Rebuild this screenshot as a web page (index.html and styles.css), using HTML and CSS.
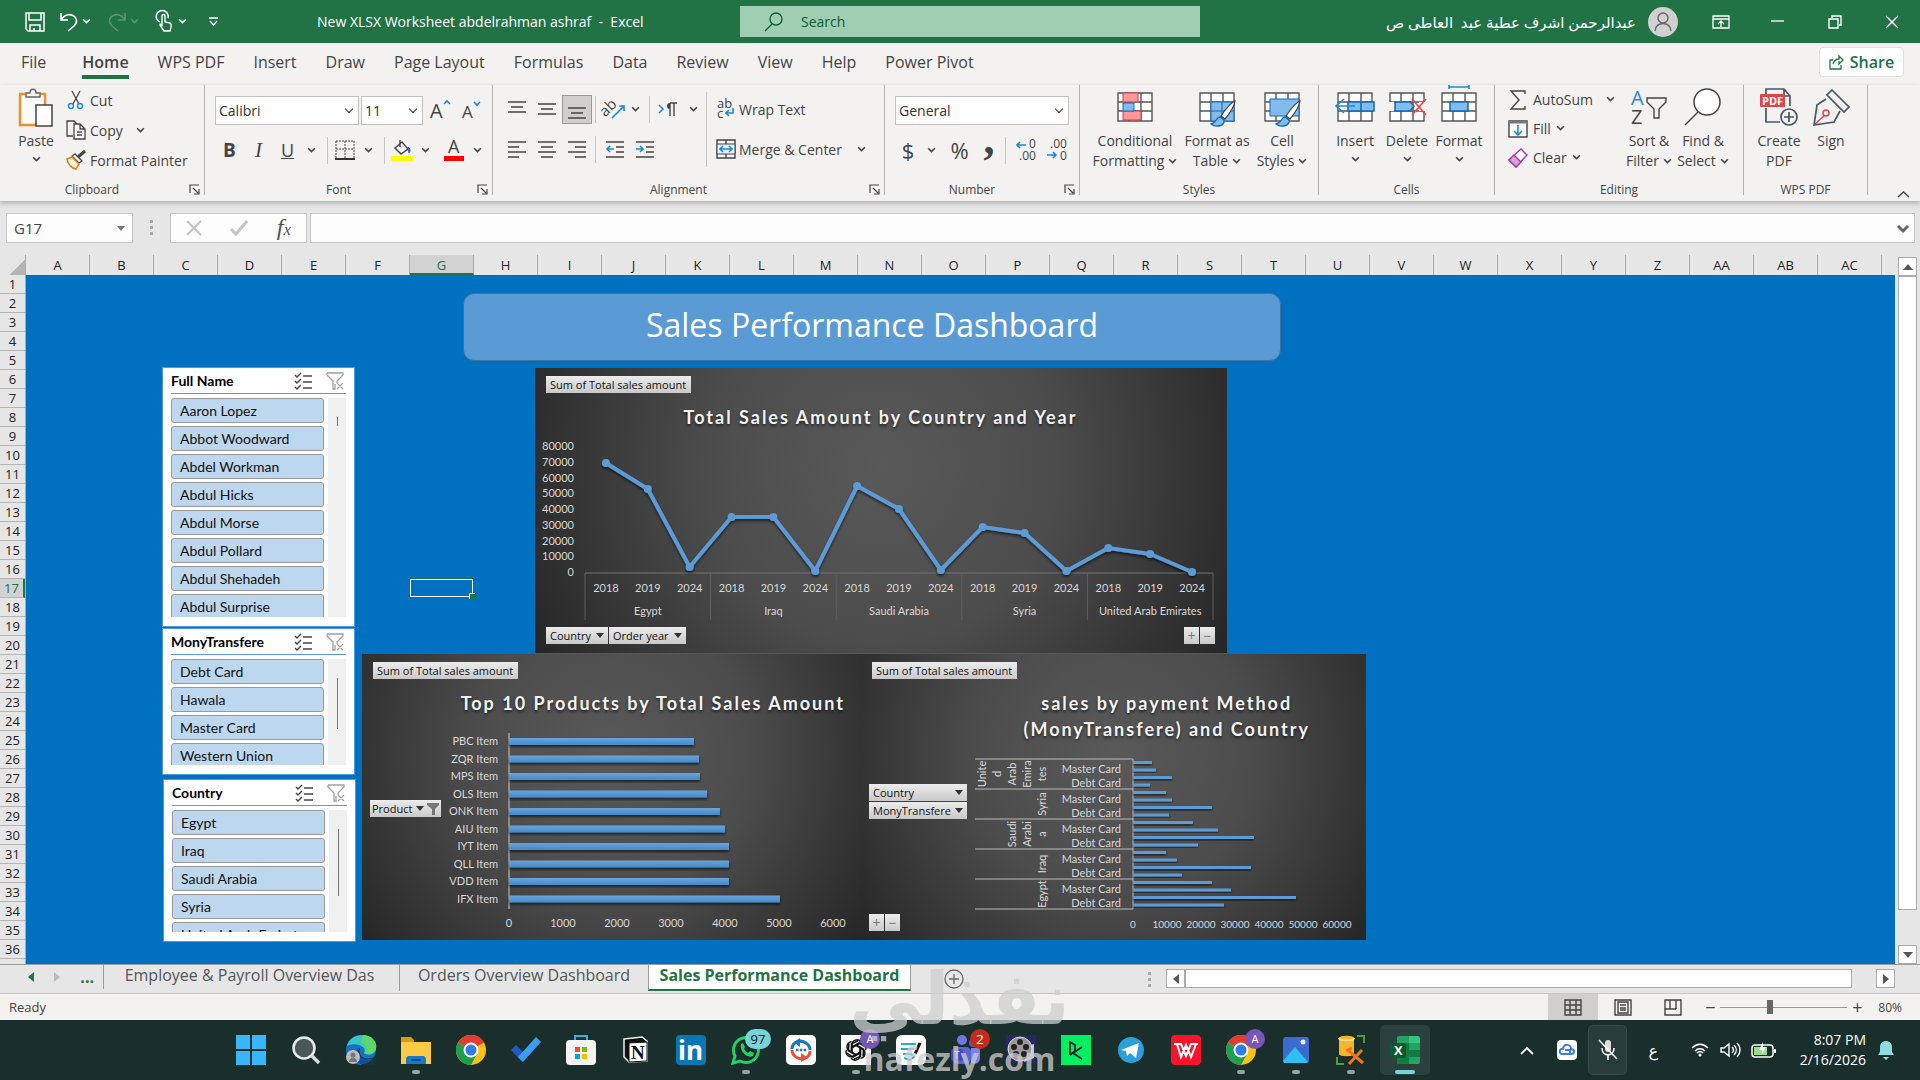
FILE: index.html
```html
<!DOCTYPE html>
<html lang="en">
<head>
  <meta charset="UTF-8" />
  <meta name="viewport" content="width=device-width, initial-scale=1.0" />
  <title>New XLSX Worksheet abdelrahman ashraf - Excel</title>
  <link rel="stylesheet" href="styles.css">
</head>
<body>
  <!-- Shared icons -->
  <svg class="sprite" aria-hidden="true">
    <symbol id="chev" viewBox="0 0 8 8"><path d="M1 2l3 3 3-3" fill="none" stroke="currentColor" stroke-width="1.4"/></symbol>
    <symbol id="launch" viewBox="0 0 11 11"><path d="M1 9V1h9M4 4l5 5M10 5v5H5" fill="none" stroke="#444" stroke-width="1.2"/></symbol>
    <symbol id="check-list" viewBox="0 0 18 18"><path d="M1 3l2 2 4-4M1 9l2 2 4-4M1 15l2 2 4-4M9 4h9M9 10h9M9 16h9" fill="none" stroke="#444" stroke-width="1.4"/></symbol>
    <symbol id="no-filter" viewBox="0 0 18 18"><path d="M1 1h16v2l-6 6v2M1 1v2l6 6v8h2v-5M11 11l6 6M17 11l-6 6" fill="none" stroke="#a0a0a0" stroke-width="1.3"/></symbol>
    <symbol id="table" viewBox="0 0 36 30"><path d="M1 1h34v28H1zM1 10h34M1 19h34M12 1v28M24 1v28" fill="#fff" stroke="#555" stroke-width="1.4"/></symbol>
    <symbol id="brush" viewBox="0 0 26 28"><path d="M25 1c-5 2-10 9-14 15l4 3c5-6 9-12 10-18z" fill="#fff" stroke="#444" stroke-width="1.3"/><path d="M10 17c-4 0-3 6-9 7 5 4 14 2 13-4z" fill="#83bcec" stroke="#1268b3" stroke-width="1.3"/></symbol>
    <symbol id="chrome" viewBox="0 0 30 30"><circle cx="15" cy="15" r="15" fill="#fbc116"/><path d="M15 15L2 7.500A15 15 0 0 1 28 7.500z" fill="#e33b2e"/><path d="M15 15L2 7.500A15 15 0 0 0 15 30l6-11z" fill="#1e9e50"/><circle cx="15" cy="15" r="7.500" fill="#fff"/><circle cx="15" cy="15" r="5.500" fill="#2f7de9"/></symbol>
  </svg>

  <!-- Title bar -->
  <header class="titlebar">
    <div class="quick">
      <button aria-label="Save"><svg width="20" height="20" viewBox="0 0 20 20"><path d="M1 1h18v18H3l-2-2zM4 1v7h12V1M5 19v-6h10v6M9 19v-3" fill="none" stroke="#fff" stroke-width="1.500"/></svg></button>
      <button aria-label="Undo"><svg width="20" height="20" viewBox="0 0 20 20"><path d="M2 1v7h7M2 8c4-6 10-7 14-3 3 4 1 7-1 9l-6 5" fill="none" stroke="#fff" stroke-width="1.600"/></svg></button>
      <button class="mini" aria-label="Undo history"><svg width="9" height="9"><use href="#chev"/></svg></button>
      <button class="dim" aria-label="Redo"><svg width="20" height="20" viewBox="0 0 20 20"><path d="M18 1v7h-7M18 8C14 2 8 1 4 5c-3 4-1 7 1 9l6 5" fill="none" stroke="#fff" stroke-width="1.600"/></svg></button>
      <button class="mini dim" aria-label="Redo history"><svg width="9" height="9"><use href="#chev"/></svg></button>
      <button aria-label="Touch mode"><svg width="18" height="21" viewBox="0 0 18 21"><path d="M4 11a6 6 0 1 1 8-4" fill="none" stroke="#fff" stroke-width="1.500"/><path d="M6 5c0-2 3-2 3 0v6l5 1c2 1 1 5 0 8H8l-4-6c0-1 1-1 2 0z" fill="#217346" stroke="#fff" stroke-width="1.400"/></svg></button>
      <button class="mini" aria-label="Touch options"><svg width="9" height="9"><use href="#chev"/></svg></button>
      <button aria-label="Customize"><svg width="9" height="9" viewBox="0 0 9 9"><path d="M0 1h9M1 4l3.500 4L8 4" fill="none" stroke="#fff" stroke-width="1.400"/></svg></button>
    </div>
    <h1>New XLSX Worksheet abdelrahman ashraf  -  Excel</h1>
    <label class="search">
      <svg width="20" height="20" viewBox="0 0 20 20"><circle cx="12" cy="7" r="6" fill="none" stroke="#0e5c33" stroke-width="1.300"/><path d="M8 12l-7 7" stroke="#0e5c33" stroke-width="1.300"/></svg>
      <input type="text" placeholder="Search" aria-label="Search" />
    </label>
    <div class="account">
      <span dir="rtl" lang="ar">عبدالرحمن اشرف عطية عبد&nbsp; العاطى ص</span>
      <svg width="30" height="30" viewBox="0 0 30 30"><circle cx="15" cy="15" r="15" fill="#d0d0d0"/><path d="M7 24c0-10 16-10 16 0M15 6a5 5 0 1 1 0 10 5 5 0 0 1 0-10" fill="none" stroke="#666" stroke-width="1.400"/></svg>
    </div>
    <div class="window-buttons">
      <button aria-label="Ribbon display"><svg width="18" height="14" viewBox="0 0 18 14"><path d="M1 1h16v12H1zM1 4h16M9 12V6M6 9l3-3 3 3" fill="none" stroke="#fff" stroke-width="1.300"/></svg></button>
      <button aria-label="Minimize"><svg width="13" height="13"><path d="M0 6h13" stroke="#fff" stroke-width="1.300"/></svg></button>
      <button aria-label="Restore"><svg width="14" height="14" viewBox="0 0 14 14"><path d="M1 4h9v9H1zM4 3V1h9v9h-2" fill="none" stroke="#fff" stroke-width="1.400"/></svg></button>
      <button aria-label="Close"><svg width="14" height="14" viewBox="0 0 14 14"><path d="M1 1l12 12M13 1L1 13" stroke="#fff" stroke-width="1.400"/></svg></button>
    </div>
  </header>

  <!-- Ribbon -->
  <nav class="menu">
    <a href="#" class="file">File</a>
    <a href="#" class="active">Home</a>
    <a href="#">WPS PDF</a>
    <a href="#">Insert</a>
    <a href="#">Draw</a>
    <a href="#">Page Layout</a>
    <a href="#">Formulas</a>
    <a href="#">Data</a>
    <a href="#">Review</a>
    <a href="#">View</a>
    <a href="#">Help</a>
    <a href="#">Power Pivot</a>
    <button class="share"><svg width="15" height="15" viewBox="0 0 15 15"><path d="M4 5H1v9h11v-4M4 9c1-3 3-5 6-5V1l4 4-4 4V6" fill="none" stroke="#217346" stroke-width="1.300"/></svg>Share</button>
  </nav>

  <div class="ribbon">
    <section class="group clipboard">
      <div class="tools">
        <button class="big"><svg width="36" height="40" viewBox="0 0 36 40"><rect x="2" y="6" width="25" height="31" fill="#fafafa" stroke="#e8912d" stroke-width="2.500"/><path d="M8 9V5h4c0-5 6-5 6 0h4v4z" fill="#f3f3f3" stroke="#666" stroke-width="1.400"/><rect x="18" y="17" width="16" height="21" fill="#fff" stroke="#444" stroke-width="1.500"/></svg><span>Paste</span><svg class="chev"><use href="#chev"/></svg></button>
        <div class="stack">
          <button><svg width="20" height="20" viewBox="0 0 20 20"><path d="M6 1l7 13M14 1L7 14" stroke="#444" stroke-width="1.300"/><circle cx="5" cy="16" r="2.500" fill="none" stroke="#1e88d8" stroke-width="1.400"/><circle cx="14" cy="16" r="2.500" fill="none" stroke="#1e88d8" stroke-width="1.400"/></svg>Cut</button>
          <button><svg width="20" height="20" viewBox="0 0 20 20"><path d="M7 16H1V1h7l3 3" fill="none" stroke="#444" stroke-width="1.300"/><path d="M8 4h6l5 5v10H8zM14 4v5h5M11 12h5M11 15h5" fill="#fff" stroke="#444" stroke-width="1.300"/></svg>Copy<svg class="chev wide"><use href="#chev"/></svg></button>
          <button><svg width="20" height="20" viewBox="0 0 20 20"><path d="M19 1l-7 6" stroke="#444" stroke-width="3"/><path d="M9 4l7 7-3 2-7-7z" fill="#fff" stroke="#444" stroke-width="1.200"/><path d="M6 7l7 7-3 5C5 18 2 14 1 9z" fill="#fdf0dc" stroke="#e0811a" stroke-width="1.500"/></svg>Format Painter</button>
        </div>
      </div>
      <footer class="launcher">Clipboard<svg width="11" height="11"><use href="#launch"/></svg></footer>
    </section>

    <section class="group font">
      <div class="tools">
        <div class="row font-top">
          <span class="combo"><select aria-label="Font"><option>Calibri</option></select></span>
          <span class="combo"><select aria-label="Font size"><option>11</option></select></span>
          <button aria-label="Grow font"><svg width="20" height="22" viewBox="0 0 20 22"><text x="0" y="19" font-size="20">A</text><path d="M14 5l3-3 3 3" class="b"/></svg></button>
          <button aria-label="Shrink font"><svg width="20" height="22" viewBox="0 0 20 22"><text x="1" y="19" font-size="17">A</text><path d="M13 3l3 3 3-3" class="b"/></svg></button>
        </div>
        <div class="row font-bottom">
          <button><b>B</b></button>
          <button><i>I</i></button>
          <button><u>U</u></button>
          <svg class="chev"><use href="#chev"/></svg>
          <hr>
          <button aria-label="Borders"><svg width="20" height="20" viewBox="0 0 20 20"><path d="M1 1h18v17M1 1v17M10 1v17M1 9h18" class="d"/><path d="M0 19h20" stroke="#333" stroke-width="2"/></svg></button>
          <svg class="chev"><use href="#chev"/></svg>
          <hr>
          <button aria-label="Fill color"><svg width="22" height="22" viewBox="0 0 22 22"><path d="M4 9l7-6 6 7-7 5zM9 1v7" class="k"/><path d="M17 8c4 3 1 6 1 6z" fill="#1e6fb8" stroke="#1e6fb8"/><path d="M0 17h22v5H0z" fill="#ff0"/></svg></button>
          <svg class="chev"><use href="#chev"/></svg>
          <button aria-label="Font color"><svg width="20" height="22" viewBox="0 0 20 22"><text x="4" y="14" font-size="18">A</text><path d="M0 17h20v5H0z" fill="#f00"/></svg></button>
          <svg class="chev"><use href="#chev"/></svg>
        </div>
      </div>
      <footer class="launcher">Font<svg width="11" height="11"><use href="#launch"/></svg></footer>
    </section>

    <section class="group alignment">
      <div class="tools">
        <div class="align-grid">
          <button aria-label="Top align"><svg width="18" height="20"><path d="M0 3h18M3 8h12M0 13h18" class="k"/></svg></button>
          <button aria-label="Middle align"><svg width="18" height="20"><path d="M0 5h18M3 10h12M0 15h18" class="k"/></svg></button>
          <button aria-label="Bottom align" class="pressed"><svg width="18" height="20"><path d="M0 9h18M3 14h12M0 19h18" class="k"/></svg></button>
          <hr>
          <button aria-label="Orientation"><svg width="20" height="20" viewBox="0 0 20 20"><text x="-4" y="12" font-size="15" transform="rotate(-45 6 10)">ab</text><path d="M7 19L19 7M14 7h5v5" class="b"/></svg></button>
          <svg class="chev"><use href="#chev"/></svg>
          <hr class="center">
          <button aria-label="Text direction"><svg width="16" height="16" viewBox="0 0 16 16"><path d="M-2 4l4 4-4 4" class="b"/><path d="M9 15V2M13 15V2M16 2H9" class="k"/><path d="M9 2a3 3 0 0 0 0 6z" fill="#444"/></svg></button>
          <svg class="chev"><use href="#chev"/></svg>
          <button aria-label="Align left"><svg width="18" height="18"><path d="M0 2h18M0 7h11M0 12h18M0 17h11" class="k"/></svg></button>
          <button aria-label="Center"><svg width="18" height="18"><path d="M0 2h18M3 7h12M0 12h18M3 17h12" class="k"/></svg></button>
          <button aria-label="Align right"><svg width="18" height="18"><path d="M0 2h18M7 7h11M0 12h18M7 17h11" class="k"/></svg></button>
          <hr>
          <button aria-label="Decrease indent"><svg width="18" height="18"><path d="M0 2h18M10 7h8M10 12h8M0 17h18" class="k"/><path d="M8 9H1M4 6L1 9l3 3" class="b"/></svg></button>
          <button aria-label="Increase indent" class="indent"><svg width="18" height="18"><path d="M0 2h18M10 7h8M10 12h8M0 17h18" class="k"/><path d="M0 9h7M4 6l3 3-3 3" class="b"/></svg></button>
        </div>
        <hr class="tall">
        <div class="stack wrap-merge">
          <button><svg width="20" height="22" viewBox="0 0 20 22"><text x="1" y="10" font-size="13">ab</text><text x="1" y="20" font-size="13">c</text><path d="M17 10v5h-7M13 12l-3 3 3 3" class="b"/></svg>Wrap Text</button>
          <button><svg width="20" height="20" viewBox="0 0 20 20"><path d="M1 1h18v18H1zM10 1v18" class="k"/><path d="M1 5h18v10H1z" fill="#e6f2fb" stroke="#444"/><path d="M4 10h12M7 7l-3 3 3 3M13 7l3 3-3 3" class="b"/></svg>Merge &amp; Center<svg class="chev wide"><use href="#chev"/></svg></button>
        </div>
      </div>
      <footer class="launcher">Alignment<svg width="11" height="11"><use href="#launch"/></svg></footer>
    </section>

    <section class="group number">
      <div class="tools">
        <div class="row"><span class="combo"><select aria-label="Number format"><option>General</option></select></span></div>
        <div class="row number-bottom">
          <button class="sym">$</button>
          <svg class="chev"><use href="#chev"/></svg>
          <button class="sym">%</button>
          <button class="sym comma">,</button>
          <hr>
          <button aria-label="Increase decimal"><svg width="20" height="22" viewBox="0 0 20 22"><text x="13" y="9" font-size="12">0</text><text x="3" y="21" font-size="12">.00</text><path d="M10 6H1M4 3L1 6l3 3" class="b"/></svg></button>
          <button aria-label="Decrease decimal"><svg width="20" height="22" viewBox="0 0 20 22"><text x="3" y="9" font-size="12">.00</text><text x="13" y="21" font-size="12">0</text><path d="M0 16h9M6 13l3 3-3 3" class="b"/></svg></button>
        </div>
      </div>
      <footer class="launcher">Number<svg width="11" height="11"><use href="#launch"/></svg></footer>
    </section>

    <section class="group styles">
      <div class="tools">
        <button class="big"><svg width="40" height="40" viewBox="0 0 40 40"><use href="#table" x="2" y="4" width="36" height="30"/><path d="M8 5h15v9H8zM8 23h18v9H8z" fill="#f99" stroke="#d9363e"/><path d="M8 15h11v8H8z" fill="#83bcec" stroke="#1268b3"/></svg><span>Conditional</span><span>Formatting <svg class="chev"><use href="#chev"/></svg></span></button>
        <button class="big"><svg width="40" height="40" viewBox="0 0 40 40"><use href="#table" x="2" y="4" width="36" height="30"/><path d="M14 14h23v19H14zM25 14v19M14 23h23" fill="#83bcec" stroke="#1268b3"/><use href="#brush" x="13" y="12" width="26" height="28"/></svg><span>Format as</span><span>Table <svg class="chev"><use href="#chev"/></svg></span></button>
        <button class="big"><svg width="40" height="40" viewBox="0 0 40 40"><use href="#table" x="2" y="4" width="36" height="30"/><path d="M8 11h29v17H8z" fill="#83bcec" stroke="#1268b3"/><use href="#brush" x="13" y="12" width="26" height="28"/></svg><span>Cell</span><span>Styles <svg class="chev"><use href="#chev"/></svg></span></button>
      </div>
      <footer>Styles</footer>
    </section>

    <section class="group cells">
      <div class="tools">
        <button class="big"><svg width="40" height="40" viewBox="0 0 40 40"><use href="#table" x="2" y="4" width="36" height="30"/><path d="M13 14h26v9H13zM26 14v9" fill="#83bcec" stroke="#1268b3" stroke-width="1.500"/><path d="M20 18H1M9 11l-8 7 8 7" class="b"/></svg><span>Insert</span><svg class="chev"><use href="#chev"/></svg></button>
        <button class="big"><svg width="40" height="40" viewBox="0 0 40 40"><use href="#table" x="2" y="4" width="36" height="30"/><path d="M1 14h6v9H1zM32 14h7v9h-7z" fill="#f3f2f1"/><path d="M8 14h15l4 4-4 5H8z" fill="#83bcec" stroke="#1268b3" stroke-width="1.500"/><path d="M25 11l14 16M39 11L25 27" fill="none" stroke="#f0464e" stroke-width="1.800"/></svg><span>Delete</span><svg class="chev"><use href="#chev"/></svg></button>
        <button class="big"><svg width="40" height="40" viewBox="0 0 40 40"><use href="#table" x="2" y="4" width="36" height="30"/><path d="M11 14h18v9H11z" fill="#83bcec" stroke="#1268b3" stroke-width="1.500"/><path d="M10-3v4M30-3v4M10-1h20" class="b"/></svg><span>Format</span><svg class="chev"><use href="#chev"/></svg></button>
      </div>
      <footer>Cells</footer>
    </section>

    <section class="group editing">
      <div class="tools">
        <div class="stack">
          <button><svg width="20" height="20" viewBox="0 0 20 20"><path d="M17 4V1H3l8 9-8 9h14v-3" class="k"/></svg>AutoSum<svg class="chev wide"><use href="#chev"/></svg></button>
          <button><svg width="20" height="20" viewBox="0 0 20 20"><path d="M1 2h18v16H1z" fill="#fff" stroke="#444" stroke-width="1.400"/><path d="M1 3h18" stroke="#777" stroke-width="3"/><path d="M10 6v10M6 12l4 4 4-4" class="b"/></svg>Fill<svg class="chev"><use href="#chev"/></svg></button>
          <button><svg width="20" height="20" viewBox="0 0 20 20"><path d="M13 1l6 6-11 12-7-7z" fill="#fff" stroke="#a33aa8" stroke-width="1.400"/><path d="M6 7l7 7-5 5-7-7z" fill="#d9a0dd" stroke="#a33aa8" stroke-width="1.400"/></svg>Clear<svg class="chev"><use href="#chev"/></svg></button>
        </div>
        <button class="big"><svg width="40" height="40" viewBox="0 0 40 40"><text x="2" y="17" font-size="20" class="blue">A</text><text x="2" y="36" font-size="20">Z</text><path d="M18 10h19v4l-7 7v9h-5v-9l-7-7z" class="k"/></svg><span>Sort &amp;</span><span>Filter <svg class="chev"><use href="#chev"/></svg></span></button>
        <button class="big"><svg width="40" height="40" viewBox="0 0 40 40"><circle cx="24" cy="14" r="13" fill="#fff" stroke="#444" stroke-width="1.500"/><path d="M15 24L2 37" class="k"/></svg><span>Find &amp;</span><span>Select <svg class="chev"><use href="#chev"/></svg></span></button>
      </div>
      <footer>Editing</footer>
    </section>

    <section class="group wps">
      <div class="tools">
        <button class="big"><svg width="40" height="40" viewBox="0 0 40 40"><path d="M7 20v14h14M31 18V8l-6-7H7v6M25 1v7h6" fill="none" stroke="#4a5568" stroke-width="1.700"/><rect x="1" y="6" width="25" height="13" rx="1" fill="#e0444a"/><text x="3" y="17" font-size="11" font-weight="bold" class="white">PDF</text><circle cx="30" cy="29" r="8" fill="#f3f2f1" stroke="#4a5568" stroke-width="1.700"/><path d="M25 29h10M30 24v10" stroke="#4a5568" stroke-width="1.700"/></svg><span>Create</span><span>PDF</span></button>
        <button class="big"><svg width="40" height="40" viewBox="0 0 40 40"><path d="M21 2l17 17-5 5-17-17zM15 11L6 17 3 37l20-3 6-11" fill="none" stroke="#4a5568" stroke-width="1.700"/><path d="M4 36l9-8" stroke="#e0444a" stroke-width="1.500"/><circle cx="15" cy="25" r="3" fill="none" stroke="#e0444a" stroke-width="1.500"/></svg><span>Sign</span></button>
      </div>
      <footer>WPS PDF</footer>
    </section>
    <button class="collapse" aria-label="Collapse ribbon"><svg width="13" height="8" viewBox="0 0 13 8"><path d="M1 7l5.500-5L12 7" class="k"/></svg></button>
  </div>

  <!-- Formula bar -->
  <div class="formula-bar">
    <div class="name-box"><input type="text" value="G17" aria-label="Name box" /><span class="tri"></span></div>
    <span class="grip"></span>
    <div class="fx">
      <svg width="16" height="16"><path d="M1 1l14 14M15 1L1 15" stroke="#c4c4c4" stroke-width="2"/></svg>
      <svg width="18" height="16"><path d="M1 9l5 5L17 1" fill="none" stroke="#c4c4c4" stroke-width="3"/></svg>
      <i>f<small>x</small></i>
    </div>
    <div class="formula"><input type="text" aria-label="Formula" /><svg width="12" height="9" viewBox="0 0 12 9"><path d="M1 2l5 5 5-5" fill="none" stroke="#666" stroke-width="3"/></svg></div>
  </div>

  <!-- Worksheet -->
  <div class="grid-area">
    <div class="corner"></div>
    <div class="cols" id="cols"></div>
    <div class="rows" id="rows"></div>
    <main class="canvas">
      <div class="banner">Sales Performance Dashboard</div>
      <div class="cell-cursor"></div>

      <section class="slicer names">
        <header><h2>Full Name</h2><svg><use href="#check-list"/></svg><svg><use href="#no-filter"/></svg></header>
        <div class="items">
          <div class="list">
            <button>Aaron Lopez</button>
            <button>Abbot Woodward</button>
            <button>Abdel Workman</button>
            <button>Abdul Hicks</button>
            <button>Abdul Morse</button>
            <button>Abdul Pollard</button>
            <button>Abdul Shehadeh</button>
            <button>Abdul Surprise</button>
          </div>
          <div class="track"><span></span></div>
        </div>
      </section>
      <section class="slicer transfer">
        <header><h2>MonyTransfere</h2><svg><use href="#check-list"/></svg><svg><use href="#no-filter"/></svg></header>
        <div class="items">
          <div class="list">
            <button>Debt Card</button>
            <button>Hawala</button>
            <button>Master Card</button>
            <button>Western Union</button>
          </div>
          <div class="track"><span></span></div>
        </div>
      </section>
      <section class="slicer country">
        <header><h2>Country</h2><svg><use href="#check-list"/></svg><svg><use href="#no-filter"/></svg></header>
        <div class="items">
          <div class="list">
            <button>Egypt</button>
            <button>Iraq</button>
            <button>Saudi Arabia</button>
            <button>Syria</button>
            <button>United Arab Emirates</button>
          </div>
          <div class="track"><span></span></div>
        </div>
      </section>

      <section class="chart by-year">
        <svg id="lineChart" viewBox="0 0 692 285"></svg>
        <div class="chart-body">
          <button class="field sum">Sum of Total sales amount</button>
          <h2>Total Sales Amount by Country and Year</h2>
          <div class="field-row">
            <button class="field">Country<span class="tri"></span></button>
            <button class="field">Order year<span class="tri"></span></button>
            <span class="push"></span>
            <button class="field pm">+</button>
            <button class="field pm">−</button>
          </div>
        </div>
      </section>

      <section class="chart products">
        <svg id="productChart" viewBox="0 0 499 286"></svg>
        <div class="chart-body">
          <button class="field sum">Sum of Total sales amount</button>
          <h2>Top 10 Products by Total Sales Amount</h2>
          <button class="field product">Product<span class="tri"></span><svg width="12" height="12" viewBox="0 0 12 12"><path d="M0 0h12v2L8 6v6H5V6L0 2z" fill="#777"/></svg></button>
        </div>
      </section>

      <section class="chart payments">
        <svg id="paymentChart" viewBox="0 0 505 286"></svg>
        <div class="chart-body">
          <button class="field sum">Sum of Total sales amount</button>
          <h2>sales by payment Method<br>(MonyTransfere) and Country</h2>
          <div class="field-col">
            <button class="field">Country<span class="tri"></span></button>
            <button class="field">MonyTransfere<span class="tri"></span></button>
          </div>
          <div class="field-row">
            <button class="field pm">+</button>
            <button class="field pm">−</button>
          </div>
        </div>
      </section>
    </main>
    <div class="vscroll">
      <button aria-label="Scroll up"><span class="tri up"></span></button>
      <div class="thumb"></div>
      <button aria-label="Scroll down"><span class="tri"></span></button>
    </div>
  </div>

  <!-- Sheet tabs -->
  <div class="sheet-tabs">
    <div class="sheet-nav"><span class="tri left green"></span><span class="tri right pale"></span><b>...</b></div>
    <a href="#" class="payroll">Employee &amp; Payroll Overview Das</a>
    <a href="#" class="orders">Orders Overview Dashboard</a>
    <a href="#" class="active">Sales Performance Dashboard</a>
    <button class="add" aria-label="New sheet"><svg width="20" height="20" viewBox="0 0 20 20"><path d="M10 1a9 9 0 1 1 0 18 9 9 0 0 1 0-18M5 10h10M10 5v10" fill="none" stroke="#666" stroke-width="1.300"/></svg></button>
    <span class="grip"></span>
    <div class="hscroll">
      <button aria-label="Scroll left"><span class="tri left"></span></button>
      <div class="thumb"></div>
      <button aria-label="Scroll right"><span class="tri right"></span></button>
    </div>
  </div>

  <div class="status">
    <span>Ready</span>
    <div class="views">
      <button class="on" aria-label="Normal"><svg width="18" height="17" viewBox="0 0 18 17"><path d="M1 1h16v15H1zM1 6h16M1 11h16M6 1v15M12 1v15" class="k"/></svg></button>
      <button aria-label="Page layout"><svg width="18" height="17" viewBox="0 0 18 17"><path d="M1 1h16v15H1zM4 3h10v11H4zM6 6h6M6 9h6M6 11h6" class="k"/></svg></button>
      <button aria-label="Page break"><svg width="18" height="17" viewBox="0 0 18 17"><path d="M1 1h16v15H1zM6 1v9M12 1v9M1 10h11" class="k"/></svg></button>
    </div>
    <button class="zoom-btn">−</button>
    <input type="range" min="10" max="190" value="80" aria-label="Zoom" />
    <button class="zoom-btn">+</button>
    <span class="percent">80%</span>
  </div>

  <!-- Taskbar -->
  <div class="taskbar">
    <div class="apps">
      <button aria-label="Start"><svg viewBox="0 0 30 30"><path d="M0 0h14v14H0zM16 0h14v14H16zM0 16h14v14H0zM16 16h14v14H16z" fill="#36b8f8"/></svg></button>
      <button aria-label="Search"><svg viewBox="0 0 30 30"><circle cx="13" cy="13" r="10.500" fill="#4b5756" stroke="#e8eeee" stroke-width="2.500"/><path d="M21 21l7 7" stroke="#d5dcdc" stroke-width="3.500"/></svg></button>
      <button aria-label="Edge"><svg viewBox="0 0 30 30"><circle cx="15" cy="15" r="15" fill="#1572c4"/><path d="M1 11C4-3 28-4 30 12c0 8-8 9-12 6 4-6-8-12-17-7z" fill="#35c6c9"/><path d="M17 0c9 0 15 7 13 14-2 6-9 6-12 4 4-6 1-9-3-10z" fill="#5fd66c"/><path d="M14 13c-2 8 4 13 14 9l2-5v13H16c-6-3-7-14-2-17z" fill="#1b3230"/><path d="M13 13c-3 9 5 13 14 10-4 8-18 9-18-3 0-4 2-6 4-7z" fill="#0f4f9e"/><circle cx="7" cy="22" r="7" fill="#bdbdbd"/><circle cx="7" cy="20" r="2.500" fill="#777"/><path d="M3 27c0-6 8-6 8 0z" fill="#777"/></svg></button>
      <button class="open" aria-label="Explorer"><svg viewBox="0 0 30 30"><path d="M0 2h10l3 3v5H0z" fill="#d99b12"/><path d="M0 7h30v22H0z" fill="#fccb45"/><path d="M5 29v-6l2-2h16l2 2v6z" fill="#1a79c6"/><path d="M10 25h10" stroke="#0d4f8b" stroke-width="2"/></svg></button>
      <button aria-label="Chrome"><svg><use href="#chrome"/></svg></button>
      <button aria-label="To Do"><svg viewBox="0 0 30 30"><path d="M0 15l5-5 10 10-4 7z" fill="#2159c4"/><path d="M7 22L25 2l5 5-18 20z" fill="#3b9cf0"/></svg></button>
      <button aria-label="Store"><svg viewBox="0 0 30 30"><path d="M9 7V1h12v6" fill="none" stroke="#2bb3e6" stroke-width="2"/><rect y="5" width="30" height="25" rx="4" fill="#f3f3f3"/><path d="M9 12h5v5H9z" fill="#f25022"/><path d="M16 12h5v5h-5z" fill="#7fba00"/><path d="M9 19h5v5H9z" fill="#00a4ef"/><path d="M16 19h5v5h-5z" fill="#ffb900"/></svg></button>
      <button aria-label="Notion"><svg viewBox="0 0 30 30"><path d="M3 4l18-2 5 4v20l-18 1-5-5z" fill="#111" stroke="#eee" stroke-width="1.500"/><path d="M8 8l18-1v19L8 27z" fill="#fff" stroke="#111"/><text x="10" y="24" font-size="19" class="serif">N</text></svg></button>
      <button aria-label="LinkedIn"><svg viewBox="0 0 30 30"><rect width="30" height="30" rx="4" fill="#0a76b4"/><text x="2" y="25" font-size="26" class="white bold">in</text></svg></button>
      <button class="open" aria-label="WhatsApp"><svg viewBox="0 0 30 30"><path d="M2 28l2-7a12.500 12.500 0 1 1 5 5z" fill="none" stroke="#27cf63" stroke-width="3"/><path d="M10 9l2-1 2 4-1 2c1 2 3 3 4 4l2-2 4 2-1 3c-6 3-14-5-12-12z" fill="#27cf63"/></svg><em class="teal">97</em></button>
      <button aria-label="Messages"><svg viewBox="0 0 30 30"><rect width="30" height="30" rx="5" fill="#fff"/><path d="M6 14c0-7 8-10 14-6 3 2 4 4 4 7" fill="none" stroke="#1c74c8" stroke-width="3"/><path d="M14 3v9L8 7z" fill="#1c74c8"/><path d="M24 16c0 7-8 10-14 6-3-2-4-4-4-7" fill="none" stroke="#ef4d3c" stroke-width="3"/><path d="M15 18v9l7-4z" fill="#ef4d3c"/><path d="M10 15h10" stroke="#1c74c8" stroke-width="2.500" stroke-dasharray="2.500 1.300"/></svg></button>
      <button class="open" aria-label="ChatGPT"><svg viewBox="0 0 30 30"><path d="M0 0h30v30H0z" fill="#fff"/><g fill="none" stroke="#111" stroke-width="1.500"><path id="petal" d="M11 18v-8c0-5 6-7 9-3M11 12l7-4 6 4"/><use href="#petal" transform="rotate(60 15 15)"/><use href="#petal" transform="rotate(120 15 15)"/><use href="#petal" transform="rotate(180 15 15)"/><use href="#petal" transform="rotate(240 15 15)"/><use href="#petal" transform="rotate(300 15 15)"/></g></svg><em class="purple">A</em></button>
      <button aria-label="Notes"><svg viewBox="0 0 30 30"><rect width="30" height="30" rx="6" fill="#fff"/><path d="M5 9h15M5 14h13M7 19h8l3 3-4 3-6-2" fill="none" stroke="#29a9d6" stroke-width="2"/><path d="M24 8l-5 11" stroke="#111" stroke-width="3"/></svg></button>
      <button aria-label="Teams"><svg viewBox="0 0 30 30"><circle cx="11" cy="5" r="5" fill="#6d78dd"/><circle cx="22" cy="8" r="4" fill="#5059c9"/><rect x="2" y="12" width="18" height="17" rx="5" fill="#5b64d0"/><path d="M20 13h9v10c0 5-5 7-9 5z" fill="#7b83eb"/><rect y="14" width="12" height="12" rx="2" fill="#424bbb"/><text x="3" y="24" font-size="10" class="white">T</text></svg><em class="red">2</em></button>
      <button aria-label="Movies"><svg viewBox="0 0 30 30"><path d="M0 0h30v28H0z" fill="#232a63"/><path d="M18 12l10-3v14l-10 4z" fill="#c9c9c9"/><circle cx="14" cy="14" r="12" fill="#999" stroke="#ddd"/><g fill="#222"><circle cx="14" cy="7" r="3"/><circle cx="8" cy="12" r="3"/><circle cx="20" cy="12" r="3"/><circle cx="10" cy="19" r="3"/><circle cx="18" cy="19" r="3"/></g></svg></button>
      <button aria-label="DataCamp"><svg viewBox="0 0 30 30"><path d="M0 0h30v30H0z" fill="#03ef62"/><path d="M9 20V7l5 3v6l-5 4M21 12l-9 6 9 6" fill="none" stroke="#05192d" stroke-width="1.700"/></svg></button>
      <button aria-label="Telegram"><svg viewBox="0 0 30 30"><circle cx="15" cy="15" r="13" fill="#2aa1da"/><path d="M5 15l18-7-3 15-6-5-3 3-1-5z" fill="#fff"/></svg></button>
      <button aria-label="WPS"><svg viewBox="0 0 30 30"><rect width="30" height="30" rx="4" fill="#f8152b"/><path d="M3 9h7l5 12 5-12h7M6 9l4 13 5-12 5 12 5-13M11 14h8" fill="none" stroke="#fff" stroke-width="2"/></svg></button>
      <button class="open" aria-label="Chrome profile"><svg><use href="#chrome"/></svg><em class="purple">A</em></button>
      <button class="open" aria-label="Photos"><svg viewBox="0 0 30 30"><rect x="2" y="2" width="26" height="26" rx="3" fill="#3c6bd0"/><path d="M2 26l12-14 13 15-2 1H3z" fill="#2fc0f2"/><circle cx="22" cy="7" r="2.500" fill="#e6f4ff"/></svg></button>
      <button class="open" aria-label="Database tools"><svg viewBox="0 0 30 30"><path d="M3 3c0-3 15-3 15 0v16c0 3-15 3-15 0z" fill="#f6b52a"/><path d="M3 3c0 3 15 3 15 0" fill="none" stroke="#ffe08a" stroke-width="2"/><path d="M21 1h7v7M1 22v7h7" fill="none" stroke="#4f9a3a" stroke-width="2"/><path d="M12 15l15 13M26 15L13 29M10 16l6-3" stroke="#e8781e" stroke-width="3"/></svg></button>
      <button class="open current" aria-label="Excel"><svg viewBox="0 0 30 30"><rect x="7" y="1" width="23" height="28" rx="2" fill="#21a366"/><path d="M7 8h12v21H9l-2-2z" fill="#107c41"/><path d="M19 15h11v7H19z" fill="#107c41"/><path d="M19 1h9l2 2v5H19z" fill="#33c481"/><rect x="0" y="8" width="16" height="15" rx="2" fill="#0b5a2f"/><text x="4" y="20" font-size="13" class="white bold">X</text></svg></button>
    </div>
    <div class="tray">
      <svg width="14" height="9"><path d="M1 8l6-6 6 6" fill="none" stroke="#fff" stroke-width="1.800"/></svg>
      <svg width="20" height="20" viewBox="0 0 20 20"><rect width="20" height="20" rx="4" fill="#fff"/><path d="M5 14c-4-1-2-6 1-5 1-6 8-5 8 0 4 0 4 5 0 5zM8 10h5v4" fill="none" stroke="#3b7de0" stroke-width="2"/></svg>
      <button class="mic" aria-label="Microphone muted"><svg width="20" height="22" viewBox="0 0 20 22"><rect x="7" y="1" width="6" height="12" rx="3" fill="#ddd"/><path d="M4 9c0 9 12 9 12 0M10 16v5M1 1l18 19" fill="none" stroke="#fff" stroke-width="1.600"/></svg></button>
      <span class="lang" lang="ar">ع</span>
      <svg width="18" height="14" viewBox="0 0 18 14"><path d="M1 5c5-5 11-5 16 0M4 8c3-3 7-3 10 0M6 10c2-2 4-2 6 0" fill="none" stroke="#fff" stroke-width="1.600"/><circle cx="9" cy="12" r="1.500" fill="#fff"/></svg>
      <svg width="20" height="16" viewBox="0 0 20 16"><path d="M1 6h3l5-4v12l-5-4H1zM12 5c2 2 2 4 0 6M14 3c3 3 3 7 0 10M17 1c4 4 4 10 0 14" fill="none" stroke="#fff" stroke-width="1.400"/></svg>
      <svg width="26" height="16" viewBox="0 0 26 16"><rect x="1" y="3" width="21" height="12" rx="3" fill="none" stroke="#fff" stroke-width="1.500"/><rect x="3" y="5" width="13" height="8" fill="#9bdc8c"/><path d="M24 7v4" stroke="#fff" stroke-width="2"/><path d="M12 0L8 8h3v4l4-7h-3z" fill="#fff"/></svg>
      <div class="clock"><span>8:07 PM</span><span>2/16/2026</span></div>
      <svg width="18" height="20" viewBox="0 0 18 20"><path d="M1 15l2-3V7c0-8 12-8 12 0v5l2 3zM6 17h6l-3 3z" fill="#8fdcdc"/></svg>
    </div>
  </div>

  <div class="watermark"><span lang="ar">نفذلي</span><span>nafezly.com</span></div>

  <script src="script.js"></script>
</body>
</html>
```
FILE: styles.css
```css
* {
  box-sizing: border-box;
}
body {
  margin: 0;
  min-height: 100vh;
  display: flex;
  flex-direction: column;
  overflow: hidden;
  font-family: 'Open Sans', 'Noto Sans', 'DejaVu Sans', sans-serif;
  font-size: 14px;
  color: #444;
  background: #e6e6e6;
}
button, input, select {
  font: inherit;
  color: inherit;
  background: none;
  border: 0;
  padding: 0;
  margin: 0;
  border-radius: 0;
}
button {
  display: flex;
  align-items: center;
  justify-content: center;
  white-space: nowrap;
}
svg {
  flex: none;
  display: block;
  overflow: visible;
}
svg text {
  fill: #444;
}
svg .blue { fill: #1e88d8; }
svg .white { fill: #fff; }
svg .bold { font-weight: bold; }
svg .serif { font-family: 'Liberation Serif', serif; font-weight: bold; fill: #111; }
svg .k { fill: none; stroke: #444; stroke-width: 1.4; }
svg .b { fill: none; stroke: #1e88d8; stroke-width: 1.6; }
svg .d { fill: none; stroke: #444; stroke-dasharray: 2 1; }
.sprite {
  position: absolute;
  width: 0;
  height: 0;
}
hr {
  width: 1px;
  height: 27px;
  border: 0;
  margin: 0;
  background: #c8c6c4;
}
.chev {
  width: 9px;
  height: 9px;
}
.tri {
  border: 5px solid transparent;
  border-top: 6px solid #555;
  border-bottom: 0;
}
.tri.up { border-top: 0; border-bottom: 6px solid #555; }
.tri.left { border: 5px solid transparent; border-right: 6px solid #555; border-left: 0; }
.tri.right { border: 5px solid transparent; border-left: 6px solid #555; border-right: 0; }

/* Title bar */
.titlebar {
  height: 43px;
  display: flex;
  align-items: center;
  background: #217346;
  color: #fff;
}
.quick {
  display: flex;
  align-items: center;
  width: 317px;
  padding-left: 24px;
}
.quick button { width: 22px; margin-right: 12px; }
.quick .mini { width: 12px; margin: 0 14px 0 -12px; }
.quick .dim { opacity: 0.25; }
.titlebar h1 {
  width: 423px;
  margin: 0;
  font-size: 14px;
  font-weight: normal;
  white-space: pre;
}
.search {
  flex: 0 1 460px;
  height: 31px;
  display: flex;
  align-items: center;
  gap: 17px;
  padding-left: 24px;
  background: #a0ceb2;
}
.search input { width: 100%; }
.search input::placeholder { color: #0e5c33; opacity: 1; }
.account {
  flex: 1;
  display: flex;
  align-items: center;
  justify-content: flex-end;
  gap: 12px;
  font-size: 15px;
  white-space: nowrap;
}
.window-buttons {
  display: flex;
  margin-left: 14px;
}
.window-buttons button { width: 57px; height: 43px; }

/* Menu */
.menu {
  height: 42px;
  display: flex;
  align-items: flex-start;
  gap: 29px;
  padding: 0 16px 0 21px;
  background: #f3f2f1;
}
.menu a {
  height: 36px;
  line-height: 38px;
  color: #444;
  font-size: 16px;
  text-decoration: none;
  white-space: nowrap;
}
.menu .file { margin-right: 7px; }
.menu .active {
  font-weight: 600;
  border-bottom: 4px solid #217346;
}
.share {
  width: 85px;
  height: 30px;
  margin: 4px 0 0 auto;
  gap: 6px;
  font-size: 16px;
  font-weight: 600;
  color: #217346;
  background: #fff;
  border: 1px solid #e1dfdd;
  border-radius: 4px;
}

/* Ribbon */
.ribbon {
  height: 116px;
  display: flex;
  background: #f3f2f1;
  box-shadow: 0 2px 5px rgba(0, 0, 0, 0.25);
}
.group {
  height: 110px;
  flex: none;
  display: flex;
  flex-direction: column;
  border-right: 1px solid #b3b0ad;
}
.tools {
  flex: 1;
  display: flex;
}
.group footer {
  height: 11px;
  padding: 0 4px;
  font-size: 12px;
  line-height: 11px;
  text-align: center;
}
.group .launcher {
  display: grid;
  grid-template-columns: 1fr 20px;
  justify-items: center;
}
.launcher svg { justify-self: end; }
.row {
  display: flex;
  align-items: center;
  height: 40px;
}
.big {
  flex-direction: column;
  justify-content: flex-start;
  line-height: 20px;
  padding-top: 3px;
}
.big > svg:first-child { margin-bottom: 3px; }
.big > .chev { margin-top: 4px; }
.big span {
  display: flex;
  align-items: center;
  gap: 4px;
}
.stack {
  display: flex;
  flex-direction: column;
}
.stack button {
  height: 30px;
  justify-content: flex-start;
  gap: 3px;
}
.stack .wide { margin-left: 12px; }
.clipboard { width: 205px; }
.clipboard .big { width: 52px; margin: 0 4px 0 10px; }
.clipboard .stack button { gap: 4px; }
.clipboard .wide { margin-left: 9px; }
.font { width: 288px; }
.font .tools, .number .tools { flex-direction: column; padding: 5px 0 0 10px; }
.font-top { gap: 2px; }
.font-top button { width: 29px; }
.font-top .combo:first-child { width: 144px; }
.font-top .combo:nth-child(2) { width: 62px; }
.font-bottom > button { width: 29px; font-size: 18px; }
.font-bottom b { font-size: 19px; }
.font-bottom i { font-family: 'Liberation Serif', serif; font-size: 21px; }
.font-bottom .chev { margin: 0 9px 0 5px; }
.font-bottom hr { margin: 0 2px; }
.font-bottom .chev:last-child { margin-right: 0; }
.combo {
  position: relative;
  height: 29px;
  background: #fff;
  border: 1px solid #c3c1bf;
}
.combo select {
  appearance: none;
  width: 100%;
  height: 27px;
  padding-left: 3px;
  color: #333;
}
.combo::after {
  content: '';
  position: absolute;
  right: 6px;
  top: 9px;
  width: 5px;
  height: 5px;
  border: solid #333;
  border-width: 0 1px 1px 0;
  transform: rotate(45deg);
}
.alignment { width: 392px; }
.align-grid {
  display: grid;
  grid-template-columns: 30px 30px 30px 8px 30px 10px 16px 26px 22px;
  grid-template-rows: 40px 40px;
  align-items: center;
  padding: 4px 2px 0 9px;
}
.align-grid button { height: 29px; }
.align-grid .pressed {
  background: #d0cfce;
  border: 1px solid #999;
}
.align-grid hr { margin-left: 3px; }
.align-grid .center { margin-left: 9px; }
.align-grid .chev { justify-self: center; }
.align-grid .indent { width: 30px; }
.alignment .tall { height: 75px; margin-top: 7px; }
.wrap-merge { padding: 4px 0 0 9px; }
.wrap-merge button { height: 40px; }
.number { width: 195px; }
.number .combo { width: 174px; }
.sym { font-size: 22px; }
.number-bottom button { width: 31px; }
.number-bottom .chev { margin: 0 8px 0 6px; }
.number-bottom button:first-child { width: 26px; }
.number-bottom .comma {
  width: 28px;
  font: bold 44px/20px 'Liberation Serif', serif;
  padding-bottom: 20px;
}
.number-bottom hr { margin: 0 4px 0 2px; }
.styles { width: 239px; }
.styles .tools { padding-left: 9px; }
.styles .big { width: 92px; }
.styles .big:nth-child(2) { width: 72px; }
.styles .big:nth-child(3) { width: 58px; }
.cells { width: 176px; }
.cells .tools { padding-left: 10px; }
.cells .big { width: 52px; }
.editing { width: 249px; }
.editing .stack { width: 124px; padding-left: 13px; margin-right: 3px; }
.editing .stack button { height: 29px; gap: 5px; }
.editing .wide { margin-left: 8px; }
.editing .big { width: 54px; }
.wps { width: 124px; }
.wps .tools { padding-left: 9px; }
.wps .big { width: 52px; }
.collapse {
  margin: auto 10px 3px auto;
}

/* Formula bar */
.formula-bar {
  height: 54px;
  display: flex;
  align-items: flex-start;
  padding: 12px 5px 0 6px;
}
.name-box, .fx, .formula {
  height: 30px;
  display: flex;
  align-items: center;
  background: #fdfdfd;
  border: 1px solid #c6c6c6;
}
.name-box { width: 127px; padding: 0 7px; }
.name-box input { width: 100%; font-size: 15px; }
.name-box .tri { border-width: 5px 4px 0; border-top-color: #777; }
.grip {
  height: 15px;
  border-left: 3px dotted #a8a8a8;
}
.formula-bar .grip { margin: 7px 17px 0; }
.fx {
  width: 137px;
  justify-content: space-between;
  padding: 0 15px;
  margin-right: 3px;
}
.fx i {
  font-family: 'Liberation Serif', serif;
  font-size: 24px;
  line-height: 24px;
  color: #555;
}
.fx small { font-size: 17px; }
.formula { flex: 1; padding-right: 5px; }
.formula input { flex: 1; }

/* Worksheet */
.grid-area {
  flex: 1;
  min-height: 0;
  display: grid;
  grid-template-columns: 26px 1fr 25px;
  grid-template-rows: 20px 1fr;
}
.corner {
  border-right: 1px solid #aaa;
  background: linear-gradient(135deg, #e6e6e6 65%, #b4b4b4 65%);
}
.cols {
  display: flex;
  overflow: hidden;
}
.cols div {
  flex: 0 0 64px;
  border-right: 1px solid #aaa;
  font-size: 13px;
  line-height: 20px;
  text-align: center;
  color: #222;
}
.cols .sel {
  background: #d2d2d2;
  color: #217346;
  border-bottom: 2px solid #217346;
}
.rows {
  height: 689px;
  overflow: hidden;
  border-right: 1px solid #aaa;
}
.rows div {
  height: 19px;
  border-bottom: 1px solid #b5b5b5;
  font-size: 13px;
  line-height: 19px;
  text-align: center;
  color: #222;
}
.rows .sel {
  background: #d2d2d2;
  color: #217346;
  border-right: 2px solid #217346;
}
.canvas {
  position: relative;
  overflow: hidden;
  background: #0070c0;
}
.banner {
  position: absolute;
  left: 437px;
  top: 18px;
  width: 818px;
  height: 68px;
  border: 1px solid #41719c;
  border-radius: 11px;
  background: #5b9bd5;
  color: #fff;
  font-size: 32px;
  line-height: 62px;
  text-align: center;
}
.cell-cursor {
  position: absolute;
  left: 384px;
  top: 304px;
  width: 63px;
  height: 18px;
  border: 1px solid #fff;
  outline: 1px solid #217346;
}
.cell-cursor::after {
  content: '';
  position: absolute;
  right: -3px;
  bottom: -3px;
  width: 5px;
  height: 5px;
  background: #217346;
  border: solid #fff;
  border-width: 1px 0 0 1px;
}

/* Slicers */
.slicer {
  position: absolute;
  left: 136px;
  width: 193px;
  padding: 0 8px 9px;
  display: flex;
  flex-direction: column;
  background: #fff;
  border: 1px solid #4f9bd9;
  font-family: Lato, 'Open Sans', sans-serif;
}
.slicer.names { top: 92px; height: 260px; }
.slicer.transfer { top: 353px; height: 147px; }
.slicer.country { top: 504px; height: 163px; left: 137px; }
.slicer header {
  height: 26px;
  flex: none;
  display: flex;
  align-items: center;
  gap: 14px;
  padding-right: 2px;
  border-bottom: 1px solid #5b9bd5;
}
.slicer header svg { width: 18px; height: 18px; }
.slicer h2 {
  flex: 1;
  margin: 0;
  font-size: 14px;
  color: #000;
}
.items {
  flex: 1;
  min-height: 0;
  margin-top: 4px;
  display: flex;
  gap: 4px;
}
.list {
  flex: 1;
  display: flex;
  flex-direction: column;
  gap: 3px;
  overflow: hidden;
}
.list button {
  flex: none;
  height: 25px;
  justify-content: flex-start;
  padding-left: 8px;
  background: #bdd7ee;
  border: 1px solid #999;
  border-radius: 3px;
  color: #111;
}
.track {
  width: 18px;
  padding-top: 19px;
  background: #f0f0f0;
}
.track span {
  display: block;
  width: 1px;
  margin: 0 auto;
  background: #777;
}
.names .track span { height: 9px; }
.transfer .track span { height: 51px; }
.country .track span { height: 67px; }

/* Charts */
.chart {
  position: absolute;
  display: grid;
  background: radial-gradient(circle at 50% 35%, #595959 0%, #4c4c4c 45%, #262626 100%);
  font-family: Lato, 'Open Sans', sans-serif;
}
.by-year { left: 509px; top: 93px; width: 692px; height: 285px; }
.products { left: 336px; top: 379px; width: 499px; height: 286px; }
.payments { left: 835px; top: 379px; width: 505px; height: 286px; }
.chart > svg, .chart-body {
  grid-area: 1 / 1;
  width: 100%;
  height: 100%;
}
.chart > svg text {
  fill: #d9d9d9;
  font-size: 11px;
}
.chart > svg .end { text-anchor: end; }
.chart > svg .mid { text-anchor: middle; }
.chart > svg .small { font-size: 10px; }
.chart-body {
  z-index: 1;
  display: flex;
  flex-direction: column;
  align-items: flex-start;
  padding: 8px 12px 9px 11px;
}
.chart h2 {
  align-self: center;
  margin: 11px 0 0;
  color: #f2f2f2;
  font-size: 18px;
  line-height: 26px;
  letter-spacing: 2px;
  text-align: center;
  text-shadow: 0 2px 3px rgba(0, 0, 0, 0.6);
  white-space: nowrap;
}
.field {
  height: 17px;
  justify-content: space-between;
  padding: 0 4px;
  background: linear-gradient(#ececec, #c9c9c9);
  font: 11px 'Open Sans', sans-serif;
  color: #111;
}
.field .tri { border-width: 5px 4px 0; border-top-color: #333; }
.field.sum { width: 145px; }
.field-row {
  align-self: stretch;
  display: flex;
  gap: 1px;
  margin-top: auto;
}
.push { flex: 1; }
.field.pm {
  width: 15px;
  justify-content: center;
  font-size: 14px;
  color: #777;
}
.by-year .field-row .field:first-child { width: 62px; }
.by-year .field-row .field:nth-child(2) { width: 77px; }
.products .chart-body, .payments .chart-body {
  padding-left: 8px;
  padding-right: 0;
}
.products .sum, .payments .sum { margin-left: 3px; }
.products h2 { align-self: flex-end; margin-right: 16px; }
.product { width: 71px; margin-top: 84px; padding: 0 2px; }
.payments h2 { align-self: flex-end; margin-right: 56px; }
.field-col {
  width: 98px;
  display: flex;
  flex-direction: column;
  gap: 1px;
  margin-top: 42px;
}

/* Scrollbars */
.vscroll {
  grid-area: 1 / 3 / 3 / 4;
  display: flex;
  flex-direction: column;
  align-items: flex-end;
  padding: 2px 3px 0 0;
}
.vscroll button, .hscroll button {
  width: 19px;
  height: 19px;
  background: #fff;
  border: 1px solid #ababab;
}
.vscroll .thumb {
  width: 19px;
  height: 634px;
  margin-bottom: auto;
  background: #fff;
  border: 1px solid #ababab;
}

/* Sheet tabs */
.sheet-tabs {
  height: 30px;
  display: flex;
  padding-right: 25px;
  border-top: 1px solid #9c9c9c;
  border-bottom: 1px solid #c6c6c6;
}
.sheet-nav {
  width: 104px;
  display: flex;
  align-items: center;
  padding: 0 9px 0 28px;
  justify-content: space-between;
  margin-bottom: 4px;
  border-right: 1px solid #9c9c9c;
  color: #217346;
}
.sheet-nav b { font-size: 16px; }
.sheet-nav .green { border-right-color: #217346; }
.sheet-nav .pale { border-left-color: #bbb; }
.sheet-tabs a {
  height: 26px;
  line-height: 21px;
  font-size: 16px;
  color: #555;
  text-align: center;
  text-decoration: none;
  white-space: nowrap;
}
.sheet-tabs .payroll { width: 296px; border-right: 1px solid #9c9c9c; padding-right: 4px; }
.sheet-tabs .orders { width: 248px; }
.sheet-tabs .active {
  width: 263px;
  font-weight: bold;
  color: #217346;
  background: #fff;
  border: solid #9c9c9c;
  border-width: 0 1px;
  border-bottom: 2px solid #217346;
}
.add { margin: 0 auto 0 33px; }
.sheet-tabs .grip { margin-top: 7px; }
.hscroll {
  width: 729px;
  display: flex;
  margin: 4px 0 0 15px;
}
.hscroll .thumb {
  flex: 1;
  height: 19px;
  margin-right: 24px;
  background: #fff;
  border: 1px solid #ababab;
}

/* Status bar */
.status {
  height: 26px;
  display: flex;
  align-items: center;
  padding: 0 18px 0 9px;
  background: #f3f2f1;
  font-size: 13px;
}
.views {
  display: flex;
  margin: 0 3px 0 auto;
}
.views button { width: 50px; height: 26px; }
.views .on { background: #d0cfce; }
.zoom-btn { width: 18px; font-size: 18px; }
.status input {
  appearance: none;
  width: 127px;
  height: 14px;
  margin: 0 1px;
  background: linear-gradient(#999, #999) center / 100% 1px no-repeat;
}
.status input::-webkit-slider-thumb {
  appearance: none;
  width: 6px;
  height: 14px;
  background: #666;
}
.percent { margin-left: 12px; font-size: 12px; }

/* Taskbar */
.taskbar {
  height: 60px;
  display: flex;
  justify-content: space-between;
  align-items: center;
  padding: 0 25px 0 223px;
  background: #1a2e2c;
  color: #fff;
}
.apps { display: flex; }
.apps button {
  position: relative;
  width: 55px;
  height: 60px;
}
.apps svg { width: 30px; height: 30px; }
.apps .open::after {
  content: '';
  position: absolute;
  bottom: 6px;
  width: 8px;
  height: 4px;
  border-radius: 2px;
  background: #98a2a1;
}
.apps .current {
  width: 50px;
  height: 50px;
  margin: 5px 2px;
  background: #2c403e;
  border-radius: 5px;
}
.apps .current::after {
  bottom: 1px;
  width: 20px;
  background: #76d3d6;
}
.apps em {
  position: absolute;
  left: 32px;
  top: 9px;
  min-width: 20px;
  height: 20px;
  border-radius: 10px;
  font-style: normal;
  font-size: 13px;
  line-height: 20px;
}
.apps .teal { width: 26px; left: 27px; background: #76d3d6; color: #111; }
.apps .purple { background: #7656b6; font-size: 11px; }
.apps .red { background: #c42b1c; }
.tray {
  display: flex;
  align-items: center;
  gap: 11px;
}
.mic {
  width: 39px;
  height: 50px;
  background: #283c3a;
  border: 1px solid #3a4c4a;
  border-radius: 5px;
}
.tray > svg:first-child { margin-right: 12px; }
.lang { margin: 0 22px 0 10px; font-size: 16px; }
.clock {
  width: 78px;
  display: flex;
  flex-direction: column;
  text-align: right;
  line-height: 20px;
}

/* Watermark */
.watermark {
  position: absolute;
  left: 853px;
  top: 959px;
  width: 213px;
  display: flex;
  flex-direction: column;
  align-items: center;
  color: rgba(205, 205, 205, 0.75);
  font-weight: bold;
  pointer-events: none;
}
.watermark span {
  font-size: 32px;
  line-height: 40px;
}
.watermark span:first-child {
  font-family: 'DejaVu Sans', sans-serif;
  font-size: 72px;
  line-height: 80px;
}
```
FILE: script.js
```js
// Column and row headings
const letters = 'ABCDEFGHIJKLMNOPQRSTUVWXYZ'.split('').concat(['AA', 'AB', 'AC']);
document.getElementById('cols').innerHTML = letters
  .map(c => `<div class="${c === 'G' ? 'sel' : ''}">${c}</div>`).join('');

let rowHtml = '';
for (let i = 1; i <= 36; i++) {
  rowHtml += `<div class="${i === 17 ? 'sel' : ''}">${i}</div>`;
}
document.getElementById('rows').innerHTML = rowHtml;

function text(x, y, cls, str, extra = '') {
  return `<text x="${x}" y="${y + 4}" class="${cls}" ${extra}>${str}</text>`;
}

const defs = `<defs>
  <filter id="shade" x="-5%" y="-20%" width="110%" height="160%"><feDropShadow dx="0" dy="2" stdDeviation="1.5" flood-opacity="0.6"/></filter>
  <linearGradient id="bar" x1="0" y1="0" x2="0" y2="1"><stop offset="0" stop-color="#6ba5da"/><stop offset="1" stop-color="#4389cb"/></linearGradient>
</defs>`;

// Sales by country and year
function drawLines() {
  const ys = [95, 121, 199, 149, 149, 203, 118, 141, 202, 159, 165, 203, 180, 186, 204];
  const countries = ['Egypt', 'Iraq', 'Saudi Arabia', 'Syria', 'United Arab Emirates'];
  const years = [2018, 2019, 2024];
  const step = 628 / 15;
  let out = defs;
  for (let i = 0; i <= 8; i++) {
    out += text(39, 204 - i * 15.75, 'end', i * 10000);
  }
  out += '<path d="M50 205H678" stroke="#777"/>';
  for (let i = 0; i <= 5; i++) {
    out += `<path d="M${50 + i * 3 * step} 205v47" stroke="#5f5f5f"/>`;
  }
  countries.forEach((c, i) => {
    out += text(50 + (i * 3 + 1.5) * step, 243, 'mid', c);
  });
  const pts = ys.map((y, i) => [50 + (i + 0.5) * step, y]);
  pts.forEach((p, i) => {
    out += text(p[0], 220, 'mid', years[i % 3]);
  });
  out += `<g filter="url(#shade)"><polyline points="${pts.join(' ')}" fill="none" stroke="#5b9bd5" stroke-width="4" stroke-linejoin="round"/>`;
  pts.forEach(p => {
    out += `<circle cx="${p[0]}" cy="${p[1]}" r="4" fill="#5b9bd5"/>`;
  });
  document.getElementById('lineChart').innerHTML = out + '</g>';
}

// Top 10 products
function drawProducts() {
  const items = [['PBC', 185], ['ZQR', 190], ['MPS', 191], ['OLS', 198], ['ONK', 211],
    ['AIU', 216], ['IYT', 220], ['QLL', 220], ['VDD', 220], ['IFX', 271]];
  let out = '<path d="M147 79v176" stroke="#ccc"/>';
  items.forEach(([name, w], i) => {
    out += text(136, 87 + i * 17.5, 'end', name + ' Item');
    out += `<rect x="147" y="${84 + i * 17.5}" width="${w}" height="7" fill="url(#bar)" filter="url(#shade)"/>`;
  });
  for (let i = 0; i <= 6; i++) {
    out += text(147 + i * 54, 269, 'mid', i * 1000);
  }
  document.getElementById('productChart').innerHTML = out;
}

// Sales by payment method
function drawPayments() {
  const bars = [19, 23, 39, 17, 33, 39, 79, 36, 60, 85, 121, 65, 33, 44, 118, 49, 79, 98, 163, 91];
  const names = [
    ['Unite', 'd', 'Arab', 'Emira', 'tes'], ['Syria'], ['Saudi', 'Arabi', 'a'], ['Iraq'], ['Egypt']
  ];
  let out = '<path d="M272 105v150" stroke="#bbb"/>';
  for (let i = 0; i <= 5; i++) {
    out += `<path d="M114 ${105 + i * 30}h158" stroke="#bbb"/>`;
  }
  names.forEach((parts, i) => {
    const y = 120 + i * 30;
    out += text(260, y - 5, 'end', 'Master Card') + text(260, y + 9, 'end', 'Debt Card');
    parts.forEach((p, j) => {
      const x = 181 - (parts.length - 1 - j) * 15;
      out += text(x, y, 'mid', p, `transform="rotate(-90 ${x} ${y})"`);
    });
  });
  bars.forEach((w, i) => {
    out += `<rect x="272" y="${107 + i * 7.5}" width="${w}" height="3" fill="#5b9bd5" filter="url(#shade)"/>`;
  });
  for (let i = 0; i <= 6; i++) {
    out += text(272 + i * 34, 270, 'mid small', i * 10000);
  }
  document.getElementById('paymentChart').innerHTML = out;
}

drawLines();
drawProducts();
drawPayments();
```
